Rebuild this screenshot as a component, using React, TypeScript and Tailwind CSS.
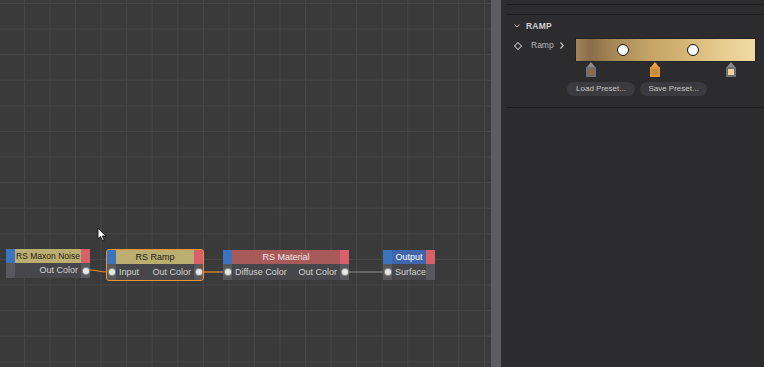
import type { ReactNode } from "react";

type NodeProps = {
  title: string;
  x: number;
  y: number;
  w: number;
  head: string;
  headText: string;
  selected?: boolean;
  leftLabel?: string;
  rightLabel?: string;
  bodyH?: number;
};

function Port() {
  return <span className="block h-[6px] w-[6px] rounded-full bg-[#e8e8e8] shadow-[0_0_0_1px_#8a8a8a]" />;
}

function GraphNode({ title, x, y, w, head, headText, selected, leftLabel, rightLabel, bodyH = 16 }: NodeProps) {
  return (
    <div
      className={`absolute ${selected ? "outline outline-1 outline-[#e8923a] rounded-[2px]" : ""}`}
      style={{ left: x, top: y, width: w }}
    >
      <div className="grid grid-cols-[9px_minmax(0,1fr)_9px]">
        <div className="h-[14px] bg-[#3b73bd]" />
        <div className={`h-[14px] flex items-center justify-center whitespace-nowrap leading-none ${head} ${headText}`}>
          {title}
        </div>
        <div className="h-[14px] bg-[#d8606a]" />
        <div className="bg-[#59595d] flex items-center justify-center" style={{ height: bodyH }}>
          {leftLabel ? <Port /> : null}
        </div>
        <div className="bg-[#47474b] flex items-center justify-between whitespace-nowrap px-[3px] text-[9px] leading-none text-[#d2d2d2]">
          <span>{leftLabel}</span>
          <span>{rightLabel}</span>
        </div>
        <div className="bg-[#59595d] flex items-center justify-center" style={{ height: bodyH }}>
          {rightLabel ? <Port /> : null}
        </div>
      </div>
    </div>
  );
}

function Knob({ left, active, fill }: { left: number; active?: boolean; fill: string }) {
  return (
    <div className="absolute top-[23px] flex flex-col items-center" style={{ left: left - 5 }}>
      <div
        className={`h-0 w-0 border-x-[4px] border-x-transparent border-b-[5px] ${active ? "border-b-[#f0a040]" : "border-b-[#8c8c8c]"}`}
      />
      <div
        className={`h-[10px] w-[10px] border-[2px] ${active ? "border-[#e0952f]" : "border-[#707070]"}`}
        style={{ background: fill }}
      />
    </div>
  );
}

function Row({ children, className = "" }: { children: ReactNode; className?: string }) {
  return <div className={`flex items-center ${className}`}>{children}</div>;
}

export default function App() {
  return (
    <div className="flex h-[367px] w-[764px] overflow-hidden font-['Liberation_Sans',Arial,sans-serif] bg-[#2c2b2e]">
      {/* node canvas */}
      <div className="relative h-full w-[491px] bg-[#3a3a3a] bg-[linear-gradient(to_right,#474747_1px,transparent_1px),linear-gradient(to_bottom,#474747_1px,transparent_1px)] bg-[size:25.55px_25.6px] bg-[position:24px_3px]">
        <svg className="absolute inset-0" width="491" height="367">
          <path d="M90 270 C98 270 99 272 107 272" stroke="#e58c32" strokeWidth="1.2" fill="none" />
          <path d="M204 272 C212 272 215 272 223 272" stroke="#e58c32" strokeWidth="1.2" fill="none" />
          <path d="M349 272 L383 272" stroke="#8e8e8e" strokeWidth="1.2" fill="none" />
        </svg>

        <GraphNode
          title="RS Maxon Noise"
          x={6}
          y={249}
          w={84}
          head="bg-[#bcae6f] text-[8.5px]"
          headText="text-[#1c1c1c]"
          rightLabel="Out Color"
          bodyH={15}
        />
        <GraphNode
          title="RS Ramp"
          x={107}
          y={250}
          w={96}
          head="bg-[#bcae6f] text-[9px]"
          headText="text-[#1c1c1c]"
          selected
          leftLabel="Input"
          rightLabel="Out Color"
        />
        <GraphNode
          title="RS Material"
          x={223}
          y={250}
          w={126}
          head="bg-[#a85a5a] text-[9px]"
          headText="text-[#f0e6e6]"
          leftLabel="Diffuse Color"
          rightLabel="Out Color"
        />
        <GraphNode title="Output" x={383} y={250} w={52} head="bg-[#3f66aa] text-[9px]" headText="text-white" leftLabel="Surface" />

        {/* mouse cursor */}
        <svg className="absolute left-[97px] top-[227px]" width="10" height="15" viewBox="0 0 10 15">
          <path d="M1 1 L1 12 L3.6 9.6 L5.6 14 L7.2 13.3 L5.3 9 L8.8 9 Z" fill="#ffffff" stroke="#111" strokeWidth="0.9" strokeLinejoin="round" />
        </svg>
      </div>

      {/* divider */}
      <div className="h-full w-[10px] bg-[#5d5d61]" />

      {/* attribute panel */}
      <div className="flex h-full flex-1 flex-col bg-[#2c2b2e] text-[#c4c4c4]">
        <div className="ml-[6px] mt-[4px] h-[10px] border-t border-[#1d1d1f]" />
        <div className="ml-[6px] border-t border-[#1d1d1f]" />

        <Row className="mt-[4px] h-[14px] pl-[13px] gap-[6px]">
          <svg width="6" height="4" viewBox="0 0 6 4">
            <path d="M0.5 0.5 L3 3 L5.5 0.5" stroke="#bdbdbd" strokeWidth="1" fill="none" />
          </svg>
          <span className="text-[8.5px] font-bold tracking-[0.2px] text-[#d0d0d0]">RAMP</span>
        </Row>

        <div className="mt-[6px] flex">
          <div className="flex w-[75px] items-start pl-[14px]">
            <Row className="h-[13px]">
              <span className="block h-[6px] w-[6px] rotate-45 border border-[#b5b5b5]" />
              <span className="ml-[10px] text-[8.5px] text-[#b8b8b8]">Ramp</span>
              <svg className="ml-[6px]" width="4" height="7" viewBox="0 0 4 7">
                <path d="M0.5 0.5 L3.3 3.5 L0.5 6.5" stroke="#c8c8c8" strokeWidth="1.1" fill="none" />
              </svg>
            </Row>
          </div>
          <div className="relative h-[38px] w-[179px]">
            <div className="h-[22px] w-full bg-[linear-gradient(to_right,#a2845a_0%,#8a6c47_8%,#a88a57_22%,#c4a566_42%,#d3b474_60%,#e6cb8e_80%,#f1d9a1_100%)] shadow-[0_0_0_1px_#232225]" />
            <span className="absolute left-[41px] top-[5px] h-[12px] w-[12px] rounded-full border-[1.5px] border-[#111] bg-white" />
            <span className="absolute left-[111px] top-[5px] h-[12px] w-[12px] rounded-full border-[1.5px] border-[#111] bg-white" />
            <Knob left={15} fill="#8b6c48" />
            <Knob left={79} active fill="#c08a48" />
            <Knob left={155} fill="#efd59c" />
          </div>
        </div>

        <Row className="mt-[5px] pl-[66px] gap-[5px]">
          <span className="flex h-[14px] w-[68px] items-center justify-center rounded-full bg-[#3b3a3e] text-[8px] text-[#c8c8c8]">
            Load Preset...
          </span>
          <span className="flex h-[14px] w-[67px] items-center justify-center rounded-full bg-[#3b3a3e] text-[8px] text-[#c8c8c8]">
            Save Preset...
          </span>
        </Row>

        <div className="ml-[6px] mt-[11px] border-t border-[#1d1d1f]" />
      </div>
    </div>
  );
}
